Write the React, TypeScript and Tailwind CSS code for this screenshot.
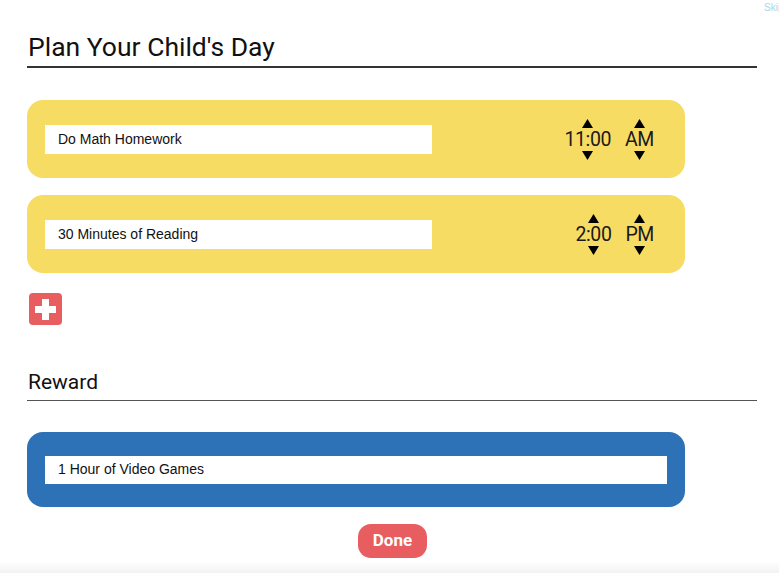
import { useState } from "react";

interface Task {
  id: number;
  label: string;
  time: string;
  period: string;
}

function Up() {
  return (
    <svg width="11" height="9" viewBox="0 0 11 9" className="block">
      <path d="M5.5 0 L11 9 L0 9 Z" fill="#000" />
    </svg>
  );
}

function Down() {
  return (
    <svg width="11" height="9" viewBox="0 0 11 9" className="block">
      <path d="M0 0 L11 0 L5.5 9 Z" fill="#000" />
    </svg>
  );
}

function Spinner({ value }: { value: string }) {
  return (
    <div className="flex flex-col items-center">
      <Up />
      <span className="text-[19.5px] leading-[23px] tracking-[-0.4px] text-[#1a1a1a] font-['Roboto',sans-serif]">
        {value}
      </span>
      <Down />
    </div>
  );
}

export default function App() {
  const [tasks] = useState<Task[]>([
    { id: 1, label: "Do Math Homework", time: "11:00", period: "AM" },
    { id: 2, label: "30 Minutes of Reading", time: "2:00", period: "PM" },
  ]);

  return (
    <div className="relative w-[779px] h-[573px] overflow-hidden bg-white font-['Roboto',sans-serif]">
      <span className="absolute left-[764px] top-0 text-[10px] text-[#a9d5ea] font-['Liberation_Sans',sans-serif]">
        Skip
      </span>

      <div className="pl-[27px] pr-[22px]">
        <h1 className="mt-[31px] text-[26.5px] leading-[31px] pb-[4px] pl-[1px] text-[#111] border-b-2 border-[#333]">
          Plan Your Child's Day
        </h1>

        <div className="mt-[32px] flex flex-col gap-[17px] w-[658px]">
          {tasks.map((t) => (
            <div
              key={t.id}
              className="h-[78px] rounded-[16px] bg-[#f7dc64] flex items-center pl-[18px] pr-[31px]"
            >
              <div className="w-[387px] h-[29px] bg-white flex items-center pl-[13px] text-[14px] text-[#111] font-['Liberation_Sans',sans-serif]">
                {t.label}
              </div>
              <div className="ml-auto flex items-center gap-[14px] mt-[1px]">
                <Spinner value={t.time} />
                <Spinner value={t.period} />
              </div>
            </div>
          ))}
        </div>

        <button className="mt-[20px] ml-[2px] w-[33px] h-[32px] rounded-[4px] bg-[#e85d5f] flex items-center justify-center">
          <svg width="21" height="21" viewBox="0 0 21 21">
            <path d="M7 0 H14 V7 H21 V14 H14 V21 H7 V14 H0 V7 H7 Z" fill="#fff" />
          </svg>
        </button>

        <h2 className="mt-[45px] text-[21px] leading-[25px] pb-[5px] pl-[1px] text-[#111] border-b-[1.5px] border-[#555]">
          Reward
        </h2>

        <div className="mt-[31px] w-[658px] h-[75px] rounded-[16px] bg-[#2d71b6] flex items-center px-[18px]">
          <div className="w-full h-[28px] bg-white flex items-center pl-[13px] text-[14px] text-[#111] font-['Liberation_Sans',sans-serif]">
            1 Hour of Video Games
          </div>
        </div>
      </div>

      <div className="mt-[17px] flex justify-center pl-[6px]">
        <button className="w-[69px] h-[34px] rounded-[13px] bg-[#e85d5f] text-white font-bold text-[17px] font-['Roboto',sans-serif]">
          Done
        </button>
      </div>

      <div className="absolute left-0 right-0 bottom-0 h-[12px] bg-gradient-to-b from-white to-[#f2f2f2]" />
    </div>
  );
}
